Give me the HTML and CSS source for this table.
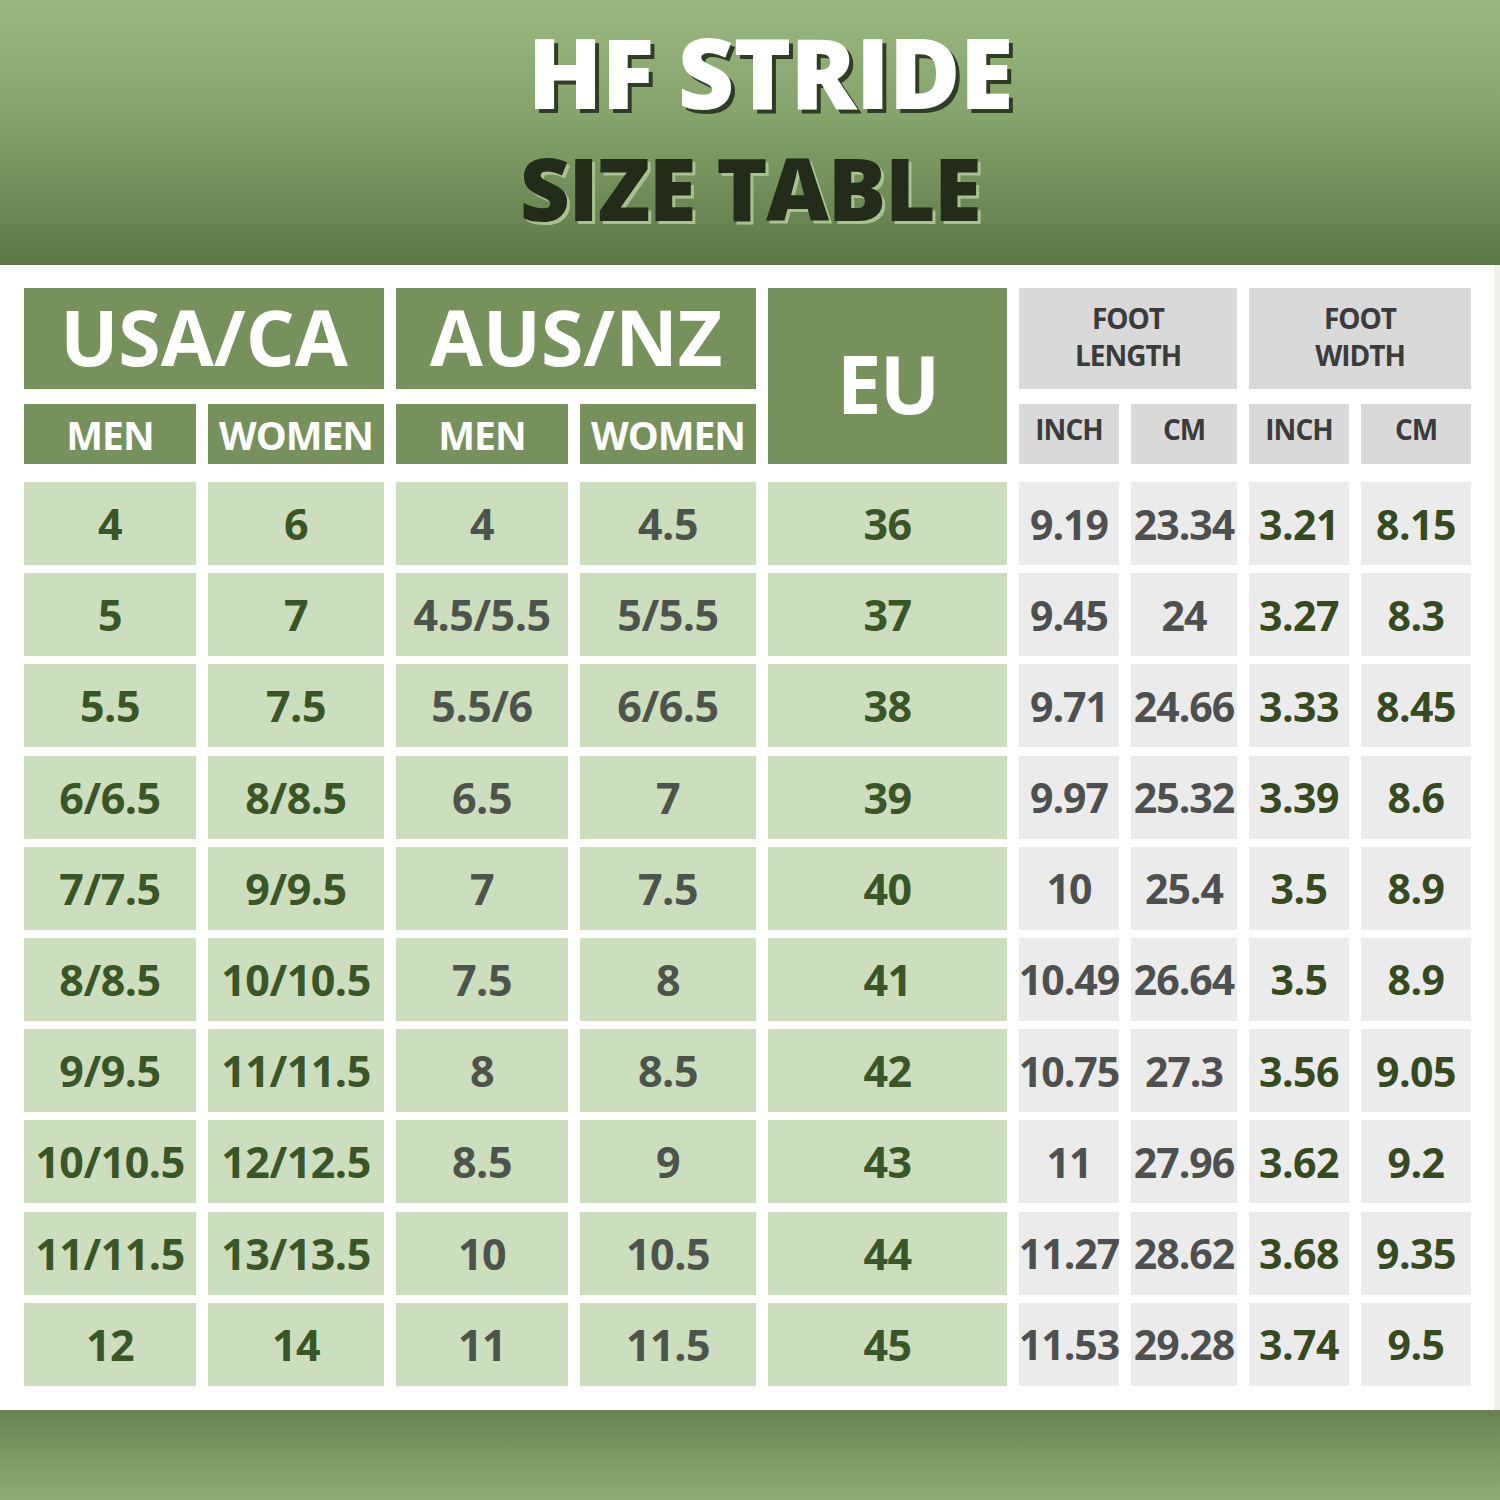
FILE: index.html
```html
<!DOCTYPE html>
<html>
<head>
<meta charset="utf-8">
<link rel="stylesheet" href="styles.css">
</head>
<body>
<div class="page">
  <header class="top">
    <div class="title t1">HF STRIDE</div>
    <div class="title t2">SIZE TABLE</div>
  </header>
  <main class="panel">
    <div class="grid head">
      <div class="h dark big span2">USA/CA</div>
      <div class="h dark big span2">AUS/NZ</div>
      <div class="h dark eu">EU</div>
      <div class="h gray two span2">FOOT<br>LENGTH</div>
      <div class="h gray two span2">FOOT<br>WIDTH</div>
      <div class="h dark sub">MEN</div>
      <div class="h dark sub">WOMEN</div>
      <div class="h dark sub">MEN</div>
      <div class="h dark sub">WOMEN</div>
      <div class="h gray unit">INCH</div>
      <div class="h gray unit">CM</div>
      <div class="h gray unit">INCH</div>
      <div class="h gray unit">CM</div>
    </div>
    <div class="grid body" id="body">
      <div class="c g">4</div><div class="c g">6</div><div class="c a">4</div><div class="c a">4.5</div><div class="c g">36</div><div class="c r">9.19</div><div class="c r">23.34</div><div class="c w">3.21</div><div class="c w">8.15</div>
      <div class="c g">5</div><div class="c g">7</div><div class="c a">4.5/5.5</div><div class="c a">5/5.5</div><div class="c g">37</div><div class="c r">9.45</div><div class="c r">24</div><div class="c w">3.27</div><div class="c w">8.3</div>
      <div class="c g">5.5</div><div class="c g">7.5</div><div class="c a">5.5/6</div><div class="c a">6/6.5</div><div class="c g">38</div><div class="c r">9.71</div><div class="c r">24.66</div><div class="c w">3.33</div><div class="c w">8.45</div>
      <div class="c g">6/6.5</div><div class="c g">8/8.5</div><div class="c a">6.5</div><div class="c a">7</div><div class="c g">39</div><div class="c r">9.97</div><div class="c r">25.32</div><div class="c w">3.39</div><div class="c w">8.6</div>
      <div class="c g">7/7.5</div><div class="c g">9/9.5</div><div class="c a">7</div><div class="c a">7.5</div><div class="c g">40</div><div class="c r">10</div><div class="c r">25.4</div><div class="c w">3.5</div><div class="c w">8.9</div>
      <div class="c g">8/8.5</div><div class="c g">10/10.5</div><div class="c a">7.5</div><div class="c a">8</div><div class="c g">41</div><div class="c r">10.49</div><div class="c r">26.64</div><div class="c w">3.5</div><div class="c w">8.9</div>
      <div class="c g">9/9.5</div><div class="c g">11/11.5</div><div class="c a">8</div><div class="c a">8.5</div><div class="c g">42</div><div class="c r">10.75</div><div class="c r">27.3</div><div class="c w">3.56</div><div class="c w">9.05</div>
      <div class="c g">10/10.5</div><div class="c g">12/12.5</div><div class="c a">8.5</div><div class="c a">9</div><div class="c g">43</div><div class="c r">11</div><div class="c r">27.96</div><div class="c w">3.62</div><div class="c w">9.2</div>
      <div class="c g">11/11.5</div><div class="c g">13/13.5</div><div class="c a">10</div><div class="c a">10.5</div><div class="c g">44</div><div class="c r">11.27</div><div class="c r">28.62</div><div class="c w">3.68</div><div class="c w">9.35</div>
      <div class="c g">12</div><div class="c g">14</div><div class="c a">11</div><div class="c a">11.5</div><div class="c g">45</div><div class="c r">11.53</div><div class="c r">29.28</div><div class="c w">3.74</div><div class="c w">9.5</div>
    </div>
  </main>
  <footer class="bottom"></footer>
</div>
</body>
</html>
```
FILE: styles.css
```css
* { box-sizing: border-box; }
html, body { margin: 0; padding: 0; }
body { width: 1500px; height: 1500px; overflow: hidden; font-family: "Open Sans", "Liberation Sans", sans-serif; }
.page { width: 1500px; height: 1500px; display: flex; flex-direction: column; }
.top {
  height: 265px;
  background: linear-gradient(to bottom, #9bb880 0%, #86a26b 45%, #5c7747 100%);
  display: flex; flex-direction: column; align-items: center;
  padding-top: 18px;
}
.title { font-weight: 800; line-height: 1.1; letter-spacing: -1px; white-space: nowrap; }
.t1 {
  font-size: 98px; color: #ffffff; padding-left: 40px;
  text-shadow: 4px 4px 0 #2f3d26;
}
.t2 {
  font-size: 87px; color: #232b1b; margin-top: 14px; letter-spacing: -1.5px;
  text-shadow: 3px 3px 0 #a9c18f;
}
.panel {
  height: 1145px; background: #ffffff;
  padding: 23px 0 0 24px;
  border-right: 6px solid #eef1ea;
}
.grid {
  display: grid;
  grid-template-columns: 172px 176px 172px 176px 239px 100px 106px 100px 110px;
  column-gap: 12px;
}
.head { grid-template-rows: 101px 60px; row-gap: 15px; }
.body { margin-top: 18px; grid-auto-rows: 83px; row-gap: 8.2px; }
.h, .c { display: flex; align-items: center; justify-content: center; white-space: nowrap; font-weight: 700; }
.span2 { grid-column: span 2; }
.dark { background: #77915c; color: #ffffff; }
.gray { background: #d9d9d9; color: #3b3b3b; }
.big { font-size: 77px; padding-bottom: 4px; }
.eu { grid-row: span 2; font-size: 80px; letter-spacing: -2px; padding-top: 12px; }
.two { font-size: 28px; line-height: 1.3; text-align: center; letter-spacing: -1px; flex-direction: column; padding-bottom: 4px; }
.sub { font-size: 39px; letter-spacing: -1px; }
.unit { font-size: 28px; letter-spacing: -1px; padding-bottom: 10px; }
.c { font-size: 43px; letter-spacing: -0.5px; }
.g { background: #cddebe; color: #3a5527; }
.a { background: #cddebe; color: #4d544b; }
.r { background: #ebebeb; color: #4e4f4f; font-size: 41px; letter-spacing: -1px; }
.w { background: #ebebeb; color: #36491f; font-size: 41px; letter-spacing: -0.5px; }
.bottom {
  flex: 1;
  background: linear-gradient(to bottom, #678250 0%, #7d9962 50%, #90ac75 100%);
}
```
